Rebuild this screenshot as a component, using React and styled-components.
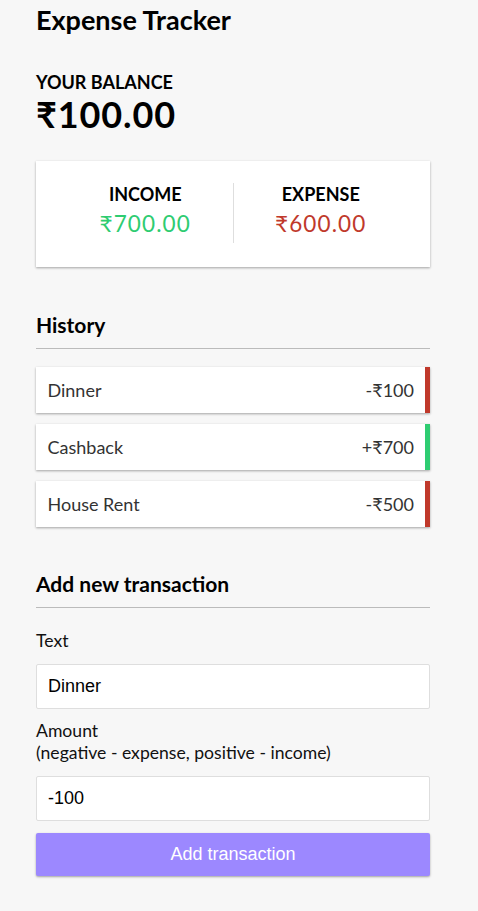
import React from "react";
import styled, { createGlobalStyle } from "styled-components";

const GlobalStyle = createGlobalStyle`
    * {
        box-sizing: border-box;
    }
    body {
        margin: 0;
        background-color: #f7f7f7;
        font-family: Lato, "Noto Sans", sans-serif;
        font-size: 18px;
        color: #000;
    }
`;

const Container = styled.div`
    width: 394px;
    margin: 0 0 0 36px;
    padding-top: 4px;
`;

const Title = styled.h2`
    margin: 0;
    font-size: 27px;
    line-height: 32px;
    font-weight: 700;
`;

const Label4 = styled.h4`
    margin: ${(p) => (p.$top ? "35px 0 0" : "0")};
    font-size: 18px;
    line-height: 22px;
    font-weight: 700;
    text-transform: uppercase;
`;

const Balance = styled.h1`
    margin: 0;
    font-size: 36px;
    line-height: 43px;
    font-weight: 700;
    letter-spacing: 0.9px;
`;

const IncExp = styled.div`
    display: flex;
    background-color: #fff;
    box-shadow: 0 1px 3px rgba(0, 0, 0, 0.12), 0 1px 2px rgba(0, 0, 0, 0.24);
    padding: 22px 22px 24px;
    margin-top: 25px;

    & > div {
        flex: 1;
        text-align: center;
    }
    & > div:first-of-type {
        border-right: 1px solid #dedede;
    }
`;

const Money = styled.p`
    margin: 5px 0 6px;
    font-size: 22.5px;
    line-height: 27px;
    letter-spacing: 1.1px;
    color: ${(p) => (p.$plus ? "#2ecc71" : "#c0392b")};
`;

const Heading = styled.h3`
    margin: ${(p) => p.$top}px 0 11px;
    padding-bottom: 11px;
    border-bottom: 1px solid #bbb;
    font-size: 21px;
    line-height: 25px;
    font-weight: 700;
`;

const List = styled.ul`
    list-style: none;
    margin: 18px 0 0;
    padding: 0;
`;

const Item = styled.li`
    display: flex;
    justify-content: space-between;
    background-color: #fff;
    box-shadow: 0 1px 3px rgba(0, 0, 0, 0.12), 0 1px 2px rgba(0, 0, 0, 0.24);
    color: #333;
    padding: 11px 11px 11px 11.5px;
    margin-bottom: 11px;
    line-height: 24px;
    border-right: 5px solid ${(p) => (p.$plus ? "#2ecc71" : "#c0392b")};
`;

const Field = styled.div`
    display: block;
`;

const FieldLabel = styled.label`
    display: inline-block;
    margin: 11px 0;
    font-size: 17.6px;
    line-height: 22.5px;
    color: #111;
`;

const Input = styled.input`
    display: block;
    width: 100%;
    border: 1px solid #dedede;
    border-radius: 2px;
    background: #fff;
    padding: 11px;
    font-family: "Liberation Sans", Arial, sans-serif;
    font-size: 18px;
    line-height: 21px;
    color: #000;
    outline: none;
`;

const Button = styled.button`
    display: block;
    width: 100%;
    margin: 12px 0 30px;
    padding: 11px;
    border: 0;
    border-radius: 2px;
    background-color: #9c88ff;
    box-shadow: 0 1px 3px rgba(0, 0, 0, 0.12), 0 1px 2px rgba(0, 0, 0, 0.24);
    color: #fff;
    font-family: "Liberation Sans", Arial, sans-serif;
    font-size: 18px;
    line-height: 21px;
    cursor: pointer;
`;

const transactions = [
    { id: 1, text: "Dinner", amount: -100 },
    { id: 2, text: "Cashback", amount: 700 },
    { id: 3, text: "House Rent", amount: -500 },
];

export default function App() {
    const [text, setText] = React.useState("Dinner");
    const [amount, setAmount] = React.useState("-100");

    return (
        <>
            <GlobalStyle />
            <Container>
                <Title>Expense Tracker</Title>
                <Label4 $top>Your Balance</Label4>
                <Balance>₹100.00</Balance>

                <IncExp>
                    <div>
                        <Label4>Income</Label4>
                        <Money $plus>₹700.00</Money>
                    </div>
                    <div>
                        <Label4>Expense</Label4>
                        <Money>₹600.00</Money>
                    </div>
                </IncExp>

                <Heading $top={45}>History</Heading>
                <List>
                    {transactions.map((t) => (
                        <Item key={t.id} $plus={t.amount > 0}>
                            <span>{t.text}</span>
                            <span>
                                {t.amount > 0 ? "+" : "-"}₹{Math.abs(t.amount)}
                            </span>
                        </Item>
                    ))}
                </List>

                <Heading $top={44}>Add new transaction</Heading>
                <form onSubmit={(e) => e.preventDefault()}>
                    <Field>
                        <FieldLabel htmlFor="text">Text</FieldLabel>
                        <Input
                            id="text"
                            type="text"
                            value={text}
                            onChange={(e) => setText(e.target.value)}
                        />
                    </Field>
                    <Field>
                        <FieldLabel htmlFor="amount">
                            Amount <br />
                            (negative - expense, positive - income)
                        </FieldLabel>
                        <Input
                            id="amount"
                            type="text"
                            value={amount}
                            onChange={(e) => setAmount(e.target.value)}
                        />
                    </Field>
                    <Button type="submit">Add transaction</Button>
                </form>
            </Container>
        </>
    );
}
